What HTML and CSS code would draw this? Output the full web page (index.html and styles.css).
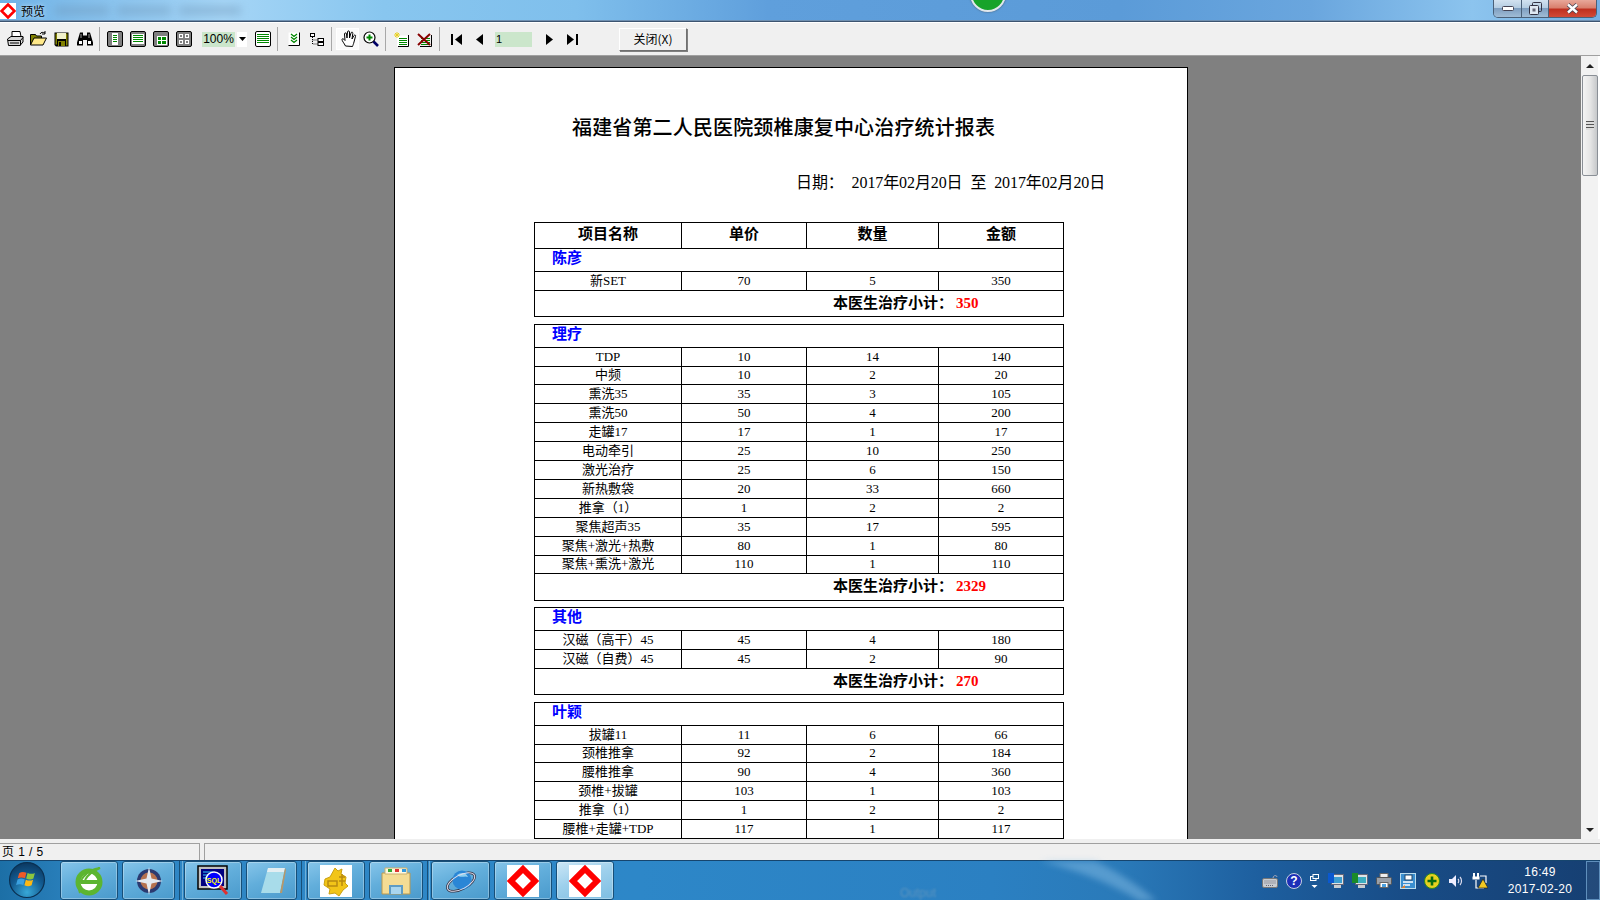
FILE: index.html
```html
<!DOCTYPE html>
<html lang="zh-CN">
<head>
<meta charset="utf-8">
<title>预览</title>
<link rel="stylesheet" href="styles.css">
</head>
<body>
<div class="screen">
  <header class="titlebar">
    <svg class="title-icon" viewBox="0 0 16 16"><rect width="16" height="16" fill="#fff"/><path d="M8 1.500 14.500 8 8 14.500 1.500 8z" fill="none" stroke="#f00" stroke-width="2.600"/></svg>
    <span class="title-text">预览</span>
    <span class="title-blur one"></span><span class="title-blur two"></span><span class="title-blur three"></span>
    <span class="dome"></span>
    <div class="wincontrols">
      <span class="wc wc-min"><svg width="12" height="6" viewBox="0 0 12 6"><rect x=".5" y=".5" width="11" height="4" rx="1" fill="#fff" stroke="#445"/></svg></span>
      <span class="wc wc-res"><svg width="13" height="13" viewBox="0 0 13 13"><rect x="3.500" y=".5" width="9" height="9" rx="1" fill="none" stroke="#334"/><rect x=".5" y="3.500" width="9" height="9" rx="1" fill="#dfe8f2" stroke="#334"/><rect x="3.500" y="6.500" width="3" height="3" fill="#667"/></svg></span>
      <span class="wc wc-close"><svg width="13" height="11" viewBox="0 0 13 11"><path d="M2 1.500 11 9.500M11 1.500 2 9.500" stroke="#445" stroke-width="4"/><path d="M2 1.500 11 9.500M11 1.500 2 9.500" stroke="#fff" stroke-width="2.400"/></svg></span>
    </div>
  </header>

  <nav class="toolbar">
    <span class="tool"><svg width="17" height="16" viewBox="0 0 17 16"><path d="M5 .5h8l1 5H5z" fill="#fff" stroke="#000"/><path d="M.5 8 4 5.500h12V11L13 14.500H1.500z" fill="#d8d8d8" stroke="#000"/><path d="M1 9.500h12.500L16 6.500M3 12h9" stroke="#000" fill="none"/><path d="M13.500 9.500v5" stroke="#000"/></svg></span>
    <span class="tool"><svg width="17" height="16" viewBox="0 0 17 16"><path d="M.5 14V3.500h5l1 1.500h5v2" fill="#808000" stroke="#000"/><path d="M.5 14 4 7h12.500L13 14z" fill="#ffe98a" stroke="#000"/><path d="M10 3c1-2 3-2 5-1" fill="none" stroke="#000"/><path d="M15 0v3h-3" fill="none" stroke="#000"/></svg></span>
    <span class="tool"><svg width="15" height="15" viewBox="0 0 15 15"><path d="M.5.5h14v14H2L.5 13z" fill="#000"/><rect x="3" y="1" width="9" height="6" fill="#f2f2cc"/><rect x="1.500" y="1.500" width="1.500" height="11" fill="#808000"/><rect x="12" y="1.500" width="1.500" height="12" fill="#808000"/><rect x="4" y="9" width="7" height="5" fill="#808000"/><rect x="5" y="10" width="2" height="4" fill="#000"/></svg></span>
    <span class="tool"><svg width="16" height="14" viewBox="0 0 16 14"><path d="M3 .5h3v3h4v-3h3l3 10v3h-6V8H6v5.500H0v-3z" fill="#000"/><rect x="2" y="9" width="3" height="3" fill="#fff"/><rect x="11" y="9" width="3" height="3" fill="#fff"/><rect x="3.500" y="2" width="1" height="4" fill="#999"/><rect x="11.500" y="2" width="1" height="4" fill="#999"/></svg></span>
    <span class="sep tight"></span>
    <span class="tool"><svg width="16" height="16" viewBox="0 0 16 16"><rect x=".5" y=".5" width="15" height="15" rx="1.500" fill="#808080" stroke="#000"/><rect x="5" y="2" width="6" height="12" fill="#fff"/><path d="M6 4.500h4M6 6.500h4M6 8.500h4M6 10.500h4" stroke="#080"/></svg></span>
    <span class="tool"><svg width="16" height="16" viewBox="0 0 16 16"><rect x=".5" y=".5" width="15" height="15" rx="1.500" fill="#808080" stroke="#000"/><rect x="2" y="3" width="12" height="10" fill="#fff"/><path d="M3 4.500h10M3 6.500h10M3 8.500h10M3 10.500h10" stroke="#080"/></svg></span>
    <span class="tool"><svg width="16" height="16" viewBox="0 0 16 16"><rect x=".5" y=".5" width="15" height="15" rx="1.500" fill="#808080" stroke="#000"/><rect x="4" y="5" width="10" height="9" fill="#fff"/><path d="M5 6h3v3H5zM9 6h4v3H9zM5 10h3v3H5zM9 10h4v3H9z" fill="#080"/></svg></span>
    <span class="tool"><svg width="16" height="16" viewBox="0 0 16 16"><rect x=".5" y=".5" width="15" height="15" rx="1.500" fill="#808080" stroke="#000"/><path d="M3 3h4v4H3zM9 3h4v4H9zM3 9h4v4H3zM9 9h4v4H9z" fill="#fff"/><path d="M4 4h2v2H4zM10 4h2v2h-2zM4 10h2v2H4zM10 10h2v2h-2z" fill="#808080"/></svg></span>
    <span class="combo">100%</span>
    <span class="dropdown"><svg width="7" height="4" viewBox="0 0 7 4"><path d="M0 0h7L3.500 4z" fill="#000"/></svg></span>
    <span class="tool list"><svg width="16" height="16" viewBox="0 0 16 16"><rect x=".5" y=".5" width="15" height="15" rx="1.500" fill="#fff" stroke="#000"/><path d="M2 3.500h12M2 5.500h12M2 7.500h12M2 9.500h12M2 11.500h12" stroke="#080"/></svg></span>
    <span class="sep"></span>
    <span class="tool"><svg width="12" height="14" viewBox="0 0 12 14"><path d="M.5.5h10.500v12.500H.5" fill="#fff"/><path d="M.5 13.500h11V.5" fill="none" stroke="#000"/><path d="M3 2 6 4.500 9 2M3 5 6 7.500 9 5M3 8 6 10.500 9 8" fill="none" stroke="#080" stroke-width="1.300"/></svg></span>
    <span class="tool"><svg width="14" height="13" viewBox="0 0 14 13"><rect x=".5" y=".5" width="4" height="3" fill="#fff" stroke="#000"/><rect x="8" y="5.500" width="5.500" height="3" fill="#fff" stroke="#000"/><rect x="8" y="9.500" width="5.500" height="3" fill="#fff" stroke="#000"/><path d="M2.500 4v7H8M2.500 7H8" fill="none" stroke="#000" stroke-dasharray="1 1"/></svg></span>
    <span class="sep"></span>
    <span class="tool pressed"><svg width="17" height="18" viewBox="0 0 17 18"><path d="M4.500 16C3 13 1 11 1 9.500S3 9 4 10.500L3.500 4c0-1.500 2-1.500 2 0l.5 4 .5-6c0-1.500 2-1.500 2 0L8.500 8l1.500-5c.5-1.500 2-1 1.800.4L11 9l2-3.500c.7-1 2-.5 1.500.8L13 12c-.5 2-1 3-1.500 4.500z" fill="#fff" stroke="#000"/></svg></span>
    <span class="tool"><svg width="16" height="16" viewBox="0 0 16 16"><circle cx="6.500" cy="6.500" r="5.500" fill="#fff" stroke="#000" stroke-width="1.200"/><path d="M6.500 3.500v6M3.500 6.500h6" stroke="#080" stroke-width="2"/><path d="M10.500 10.500 15 15" stroke="#006" stroke-width="2.600"/></svg></span>
    <span class="sep"></span>
    <span class="tool"><svg width="15" height="15" viewBox="0 0 15 15"><path d="M3 3.500h11v11H3" fill="#fff"/><path d="M14.500 3v11.500H4" fill="none" stroke="#000"/><path d="M5 6.500h8M5 8.500h8M5 10.500h8M5 12.500h8" stroke="#080"/><path d="M3 0v6M0 3h6M1 1l4 4M5 1 1 5" stroke="#e8d020"/></svg></span>
    <span class="tool"><svg width="15" height="15" viewBox="0 0 15 15"><path d="M14.500 3v11.500H3" fill="none" stroke="#000"/><path d="M4 6.500h9M4 8.500h9M4 10.500h9M4 12.500h9" stroke="#080"/><path d="M1 2 13 13M13 2 1 13" stroke="#800" stroke-width="2"/></svg></span>
    <span class="sep wide"></span>
    <span class="tool"><svg width="11" height="11" viewBox="0 0 11 11"><rect y="0" width="2" height="11"/><path d="M11 0v11L4 5.500z"/></svg></span>
    <span class="tool"><svg width="7" height="11" viewBox="0 0 7 11"><path d="M7 0v11L0 5.500z"/></svg></span>
    <span class="pageinput">1</span>
    <span class="tool next"><svg width="7" height="11" viewBox="0 0 7 11"><path d="M0 0v11l7-5.500z"/></svg></span>
    <span class="tool"><svg width="11" height="11" viewBox="0 0 11 11"><path d="M0 0v11l7-5.500z"/><rect x="9" width="2" height="11"/></svg></span>
    <button class="closebtn" type="button">关闭(X)</button>
  </nav>

  <div class="workspace">
    <main class="viewport">
      <article class="page">
        <h1 class="report-title">福建省第二人民医院颈椎康复中心治疗统计报表</h1>
        <p class="report-date">日期： 2017年02月20日 至 2017年02月20日</p>

        <table class="rt">
          <colgroup><col class="c1"><col class="c2"><col class="c3"><col class="c4"></colgroup>
          <tr class="h26 head"><th>项目名称</th><th>单价</th><th>数量</th><th>金额</th></tr>
          <tr class="h23"><td colspan="4" class="group">陈彦</td></tr>
          <tr class="h19"><td>新SET</td><td>70</td><td>5</td><td>350</td></tr>
          <tr class="h26 last"><td colspan="4" class="sum">本医生治疗小计：<span class="money">350</span></td></tr>
        </table>

        <table class="rt gap7">
          <colgroup><col class="c1"><col class="c2"><col class="c3"><col class="c4"></colgroup>
          <tr class="h23"><td colspan="4" class="group">理疗</td></tr>
          <tr class="h19"><td>TDP</td><td>10</td><td>14</td><td>140</td></tr>
          <tr class="h18"><td>中频</td><td>10</td><td>2</td><td>20</td></tr>
          <tr class="h19"><td>熏洗35</td><td>35</td><td>3</td><td>105</td></tr>
          <tr class="h19"><td>熏洗50</td><td>50</td><td>4</td><td>200</td></tr>
          <tr class="h19"><td>走罐17</td><td>17</td><td>1</td><td>17</td></tr>
          <tr class="h19"><td>电动牵引</td><td>25</td><td>10</td><td>250</td></tr>
          <tr class="h19"><td>激光治疗</td><td>25</td><td>6</td><td>150</td></tr>
          <tr class="h19"><td>新热敷袋</td><td>20</td><td>33</td><td>660</td></tr>
          <tr class="h19"><td>推拿（1）</td><td>1</td><td>2</td><td>2</td></tr>
          <tr class="h19"><td>聚焦超声35</td><td>35</td><td>17</td><td>595</td></tr>
          <tr class="h19"><td>聚焦+激光+热敷</td><td>80</td><td>1</td><td>80</td></tr>
          <tr class="h18"><td>聚焦+熏洗+激光</td><td>110</td><td>1</td><td>110</td></tr>
          <tr class="h27 last"><td colspan="4" class="sum up">本医生治疗小计：<span class="money">2329</span></td></tr>
        </table>

        <table class="rt gap6">
          <colgroup><col class="c1"><col class="c2"><col class="c3"><col class="c4"></colgroup>
          <tr class="h23"><td colspan="4" class="group">其他</td></tr>
          <tr class="h19"><td>汉磁（高干）45</td><td>45</td><td>4</td><td>180</td></tr>
          <tr class="h19"><td>汉磁（自费）45</td><td>45</td><td>2</td><td>90</td></tr>
          <tr class="h26 last"><td colspan="4" class="sum">本医生治疗小计：<span class="money">270</span></td></tr>
        </table>

        <table class="rt gap7">
          <colgroup><col class="c1"><col class="c2"><col class="c3"><col class="c4"></colgroup>
          <tr class="h23"><td colspan="4" class="group">叶颖</td></tr>
          <tr class="h19"><td>拔罐11</td><td>11</td><td>6</td><td>66</td></tr>
          <tr class="h18"><td>颈椎推拿</td><td>92</td><td>2</td><td>184</td></tr>
          <tr class="h19"><td>腰椎推拿</td><td>90</td><td>4</td><td>360</td></tr>
          <tr class="h19"><td>颈椎+拔罐</td><td>103</td><td>1</td><td>103</td></tr>
          <tr class="h19"><td>推拿（1）</td><td>1</td><td>2</td><td>2</td></tr>
          <tr class="h19 last"><td>腰椎+走罐+TDP</td><td>117</td><td>1</td><td>117</td></tr>
        </table>
      </article>
    </main>
    <aside class="vscroll">
      <span class="arrow"><svg width="8" height="4" viewBox="0 0 8 4"><path d="M0 4 4 0l4 4z" fill="#222"/></svg></span>
      <span class="thumb"><span class="grip"></span></span>
      <span class="arrow down"><svg width="8" height="4" viewBox="0 0 8 4"><path d="M0 0l4 4 4-4z" fill="#222"/></svg></span>
    </aside>
  </div>

  <div class="status">
    <span class="panel first">页 1 / 5</span>
    <span class="panel second"></span>
  </div>

  <footer class="taskbar">
    <svg class="streak" width="1600" height="40" viewBox="0 0 1600 40"><path d="M1040 0h55c25 12 45 26 62 40h-18C1115 24 1080 10 1040 0z" fill="#8fc4e8" opacity=".45"/></svg>
    <span class="ghost">Output</span>
    <span class="orb"><svg width="36" height="36" viewBox="0 0 32 32"><defs><radialGradient id="orbg" cx=".5" cy=".85" r=".8"><stop offset="0" stop-color="#38a8d8"/><stop offset=".6" stop-color="#125a90"/><stop offset="1" stop-color="#0c3c66"/></radialGradient></defs><circle cx="16" cy="16" r="15.500" fill="url(#orbg)" stroke="#0a2f50"/><path d="M9 10c2-1.500 4-1.500 6.500-.5l-1.300 5c-2.200-1-4.200-1-6.400 0z" fill="#ef5a28"/><path d="M16.500 9.700c2.500 1 4.500 1 6.500 0l-1.300 5c-2 1-4.200 1-6.400 0z" fill="#8cc63f"/><path d="M7.600 15.500c2.200-1 4.200-1 6.400 0l-1.300 5c-2.200-1-4.200-1-6.400 0z" fill="#3aa0e0"/><path d="M15 15.700c2.200 1 4.400 1 6.400 0l-1.300 5c-2 1-4.200 1-6.400 0z" fill="#fdb813"/></svg></span>
    <span class="task w58"><svg width="32" height="32" viewBox="0 0 32 32"><circle cx="16" cy="17" r="11" fill="#fff" stroke="#5cb531" stroke-width="5"/><path d="M8 17h17" stroke="#5cb531" stroke-width="4"/><path d="M7 28C2 18 14 4 27 3c-7 3-12 6-15 12" fill="none" stroke="#5cb531" stroke-width="2"/></svg></span>
    <span class="task w53"><svg width="32" height="32" viewBox="0 0 32 32"><circle cx="16" cy="16" r="12" fill="#2b3a70"/><circle cx="16" cy="16" r="8.500" fill="#b5714e"/><path d="M16 2l2.500 11.500L30 16l-11.500 2.500L16 30l-2.500-11.500L2 16l11.500-2.500z" fill="#e4e8ee"/></svg></span>
    <span class="grippers g5"></span>
    <span class="task w58"><svg width="32" height="32" viewBox="0 0 32 32"><rect x="1" y="1" width="29" height="23" fill="#c0c0c0" stroke="#000" stroke-width="1.500"/><rect x="4" y="4" width="23" height="17" fill="#000080"/><path d="M6 7h10M6 10h8M6 13h7" stroke="#3cf"/><circle cx="17" cy="15" r="8" fill="#00f" stroke="#fff" stroke-width="1.500"/><text x="17" y="18" class="sqltext">SQL</text><path d="M23 21l7 8" stroke="#e03030" stroke-width="3"/></svg></span>
    <span class="task w51"><svg width="32" height="32" viewBox="0 0 32 32"><path d="M12 3h17l-5 25H5z" fill="#a8dcea"/><path d="M12 3h17l-1 4H11z" fill="#e3eef2"/><path d="M24 28 29 3l1 2-4 23z" fill="#b89868"/></svg></span>
    <span class="grippers g6"></span>
    <span class="task w58"><svg width="32" height="32" viewBox="0 0 32 32"><rect width="32" height="32" fill="#fff"/><path d="M15 3l3 3 4-2-1 5 5 3-1 6 3 3-5 4-4 6-4-3-6 1 1-5-6-4 1-6 5-2z" fill="#f2c518" stroke="#caa010"/><path d="M8 16h9v5H8zM19 12h6M19 16h6M22 9v12" stroke="#b88a10" fill="none" stroke-width="1.500"/></svg></span>
    <span class="task w54"><svg width="32" height="32" viewBox="0 0 32 32"><path d="M2 8h28v21H2z" fill="#f4dc94" stroke="#b89850"/><path d="M5 3h22v6H5z" fill="#fff8e0" stroke="#c8b070"/><rect x="8" y="4" width="4" height="3" fill="#3a3"/><rect x="15" y="4" width="4" height="3" fill="#d33"/><rect x="22" y="4" width="4" height="3" fill="#39d"/><path d="M10 29V21h12v8" fill="#a9d6ee" stroke="#5e9cc4" stroke-width="2"/></svg></span>
    <span class="grippers g4"></span>
    <span class="task w59"><svg width="32" height="32" viewBox="0 0 32 32"><ellipse cx="16" cy="17" rx="15" ry="7" transform="rotate(-28 16 17)" fill="none" stroke="#334" stroke-width="2.500"/><circle cx="17" cy="15" r="9.500" fill="#2a86d6"/><path d="M12 10c4-3 9-3 11 2-4-2-6 2-11-2z" fill="#8fd0f0"/><ellipse cx="16" cy="17" rx="15" ry="7" transform="rotate(-28 16 17)" fill="none" stroke="#dde" stroke-width="1"/></svg></span>
    <span class="task w58"><svg width="32" height="32" viewBox="0 0 32 32"><rect width="32" height="32" fill="#fff"/><path d="M16 4 28 16 16 28 4 16z" fill="none" stroke="#f00" stroke-width="6"/></svg></span>
    <span class="task w58 active"><svg width="32" height="32" viewBox="0 0 32 32"><rect width="32" height="32" fill="#fff"/><path d="M16 4 28 16 16 28 4 16z" fill="none" stroke="#f00" stroke-width="6"/></svg></span>
    <div class="tray">
      <span class="ti"><svg width="16" height="14" viewBox="0 0 16 14"><path d="M11 4c0-3 4-3 4-1" fill="none" stroke="#aab"/><rect x=".5" y="4.500" width="15" height="9" rx="1.500" fill="#c8ccd0" stroke="#777"/><path d="M2.500 7h11M2.500 9h11M4 11.500h8" stroke="#667" stroke-dasharray="1 1"/></svg></span>
      <span class="ti"><svg width="16" height="16" viewBox="0 0 16 16"><circle cx="8" cy="8" r="7.500" fill="#1c2fb8" stroke="#c8d0e0"/><text x="8" y="12" class="helptext">?</text></svg></span>
      <span class="ti flagt"><svg width="9" height="16" viewBox="0 0 9 16"><rect x=".5" y="3.500" width="5.500" height="4" fill="none" stroke="#fff"/><rect x="3" y="1.500" width="5.500" height="4" fill="#1f5c94" stroke="#fff"/><path d="M1.500 12h6L4.500 15z" fill="#fff"/></svg></span>
      <span class="ti"><svg width="16" height="16" viewBox="0 0 16 16"><rect x="3.500" y="1.500" width="12" height="10" fill="#dfe3e6" stroke="#667"/><rect x="6" y="4" width="8" height="6" fill="#3c9dd0"/><rect x="0" y="0" width="6" height="10" fill="#0a58d0"/><rect x="6" y="12" width="7" height="3" fill="#c8ccd0"/></svg></span>
      <span class="ti"><svg width="16" height="16" viewBox="0 0 16 16"><rect x="3.500" y="1.500" width="12" height="10" fill="#dfe3e6" stroke="#667"/><rect x="6" y="4" width="8" height="6" fill="#3cadc0"/><rect x="0" y="0" width="6" height="10" fill="#1a8a2a"/><rect x="6" y="12" width="7" height="3" fill="#c8ccd0"/></svg></span>
      <span class="ti"><svg width="16" height="15" viewBox="0 0 16 15"><rect x="4" y=".5" width="8" height="4" fill="#eee" stroke="#666"/><rect x=".5" y="4.500" width="15" height="7" rx="1" fill="#9aa0a8" stroke="#555"/><rect x="4" y="9.500" width="8" height="5" fill="#fff" stroke="#666"/><rect x="6" y="11" width="4" height="3" fill="#4aa0e0"/></svg></span>
      <span class="ti"><svg width="16" height="16" viewBox="0 0 16 16"><rect x=".5" y=".5" width="15" height="15" fill="#3a8fd0" stroke="#bde"/><rect x="5" y="2" width="7" height="5" fill="#fff" stroke="#246"/><path d="M3 9h10M3 12h7" stroke="#fff" stroke-width="1.500"/><path d="M1 15l4-3v3z" fill="#e08030"/></svg></span>
      <span class="ti"><svg width="16" height="16" viewBox="0 0 16 16"><circle cx="8" cy="8" r="7.500" fill="#e8d020" stroke="#2a8a20" stroke-width="1"/><path d="M8 3.500v9M3.500 8h9" stroke="#0a6a10" stroke-width="2.600"/></svg></span>
      <span class="ti"><svg width="16" height="14" viewBox="0 0 16 14"><path d="M1 5h3l4-4v12L4 9H1z" fill="#eef"/><path d="M10 5c1 1 1 3 0 4M12 3c2 2 2 6 0 8" fill="none" stroke="#dde" stroke-width="1.200"/></svg></span>
      <span class="ti"><svg width="16" height="16" viewBox="0 0 16 16"><rect x="1" y="0" width="2" height="4" fill="#fff"/><rect x="5" y="0" width="2" height="4" fill="#fff"/><rect x=".5" y="3.500" width="7" height="3" fill="#fff"/><path d="M4 7v8h8M8 3h6v7" fill="none" stroke="#fff" stroke-width="1.200"/><path d="M11 6l5 9H6z" fill="#f4c820" stroke="#222" stroke-width=".7"/></svg></span>
    </div>
    <div class="clock"><span>16:49</span><span>2017-02-20</span></div>
    <span class="showdesk"></span>
  </footer>
</div>
</body>
</html>
```

FILE: styles.css
```css
* { box-sizing: border-box; }
html, body { margin: 0; padding: 0; }
body { font-family: "Noto Sans CJK SC", "Liberation Sans", sans-serif; background: #808080; }

.screen { width: 1600px; height: 900px; display: flex; flex-direction: column; overflow: hidden; position: relative; }

/* title bar */
.titlebar {
  height: 22px; flex: none; position: relative; display: flex; align-items: center;
  background: linear-gradient(90deg, #6fb2e6 0, #a5d5f6 14%, #88c6ef 24%, #7fbfec 36%, #5f9fdc 48%, #5b9bd8 70%, #6aa6de 82%, #8cc4ee 92%, #76b0e4 100%);
  border-bottom: 1px solid #3c5470; box-shadow: inset 0 -1px 0 #6f8fb0;
}
.title-icon { width: 16px; height: 16px; flex: none; }
.title-text { margin-left: 5px; font-size: 12px; line-height: 16px; color: #000; text-shadow: 0 0 4px #d8eefc; }
.title-blur { height: 9px; background: #6d93b4; opacity: .4; filter: blur(4px); }
.title-blur.one { width: 54px; margin-left: 10px; }
.title-blur.two { width: 54px; margin-left: 8px; }
.title-blur.three { width: 62px; margin-left: 8px; }
.dome {
  position: absolute; left: 970px; top: -24px; width: 36px; height: 36px; border-radius: 50%;
  background: #17a32a; border: 2px solid #e0e8ee; box-shadow: 0 0 2px #456;
}
.wincontrols {
  position: absolute; right: 3px; top: 0; height: 18px; display: flex;
  border: 1px solid #4a6078; border-top: 0; border-radius: 0 0 5px 5px; overflow: hidden;
}
.wc { display: flex; align-items: center; justify-content: center; height: 17px; }
.wc-min, .wc-res { width: 28px; background: linear-gradient(#d2e2f0 0, #b5cde2 45%, #7f9fc0 50%, #a0bcd6 100%); border-right: 1px solid #4a6078; }
.wc-res { width: 27px; }
.wc-close { width: 47px; background: linear-gradient(#e8a89a 0, #d9806e 45%, #bf3020 55%, #d24a38 100%); }

/* tool bar */
.toolbar {
  height: 34px; flex: none; display: flex; align-items: center; padding: 0 0 0 4px;
  background: #f0f0f0; border-top: 1px solid #fff; border-bottom: 1px solid #a0a0a0;
}
.tool { width: 23px; height: 22px; flex: none; display: flex; align-items: center; justify-content: center; }
.tool.list { margin-left: 4px; }
.tool.next { margin-left: 6px; }
.tool.pressed { background: #fbfbfb; box-shadow: inset 0 0 0 1px #fff; padding-left: 3px; }
.sep { width: 1px; height: 24px; flex: none; background: #a8a8a8; margin: 0 4px 0 3px; }
.sep.tight { margin-right: 3px; }
.sep.wide { margin-right: 5px; }
.combo {
  width: 33px; height: 15px; flex: none; margin-left: 7px; background: #cbe6cb;
  font: 12px/15px "Liberation Sans", sans-serif; color: #000; text-align: center;
}
.dropdown { width: 10px; height: 15px; flex: none; margin-left: 2px; background: #fff; display: flex; align-items: center; justify-content: center; }
.pageinput {
  width: 37px; height: 15px; flex: none; margin-left: 4px; padding-left: 1px; background: #cbe6cb;
  font: 11px/15px "Liberation Sans", sans-serif; color: #000;
}
.closebtn {
  width: 68px; height: 23px; flex: none; margin-left: 35px; padding: 0; font-size: 12px; line-height: 18px; color: #000;
  font-family: "Noto Sans CJK SC", sans-serif; background: #f0f0f0;
  border: 1px solid; border-color: #fff #707070 #707070 #fff; box-shadow: 1px 1px 0 #808080;
}

/* document area */
.workspace { flex: none; height: 783px; display: flex; background: #808080; }
.viewport { width: 1581px; flex: none; overflow: hidden; padding: 11px 0 0 394px; }
.page {
  width: 794px; min-height: 1100px; background: #fff; border: 1px solid #000; padding: 46px 0 0 139px;
  font-family: "Liberation Serif", "Noto Sans CJK SC", sans-serif; color: #000;
}
.report-title { margin: 0 0 29px 38px; font-size: 20px; line-height: 28px; font-weight: 500; white-space: nowrap; letter-spacing: .15px; }
.report-date { margin: 0 0 27px 262px; font-size: 16px; line-height: 24px; white-space: pre; letter-spacing: -.1px; word-spacing: 4px; }

.rt { border-collapse: separate; border-spacing: 0; table-layout: fixed; width: 530px; }
.rt.gap7 { margin-top: 7px; }
.rt.gap6 { margin-top: 6px; }
.c1 { width: 147px; } .c2 { width: 125px; } .c3 { width: 132px; } .c4 { width: 126px; }
.rt td, .rt th {
  padding: 0 0 2px; text-align: center; vertical-align: middle; font-size: 13px; line-height: 13px; font-weight: 400;
  border-top: 1px solid #000; border-left: 1px solid #000; overflow: hidden;
}
.rt td:last-child, .rt th:last-child { border-right: 1px solid #000; }
.rt .last td { border-bottom: 1px solid #000; }
.rt .head th { font-size: 15px; font-weight: 700; }
.rt td.group { text-align: left; padding: 0 0 3px 17px; font-size: 15px; font-weight: 700; color: #00f; }
.rt td.sum { text-align: left; padding: 0 0 0 298px; font-size: 15px; font-weight: 700; }
.rt td.sum.up { padding-bottom: 2px; }
.money { color: #f00; margin-left: 3px; }
.h18 td { height: 18px; } .h19 td { height: 19px; } .h23 td { height: 23px; }
.h26 td, .h26 th { height: 26px; } .h27 td { height: 27px; }
.last.h26 td { height: 27px; } .last.h27 td { height: 28px; } .last.h19 td { height: 20px; }

/* scrollbar */
.vscroll { width: 19px; flex: none; background: #f2f2f2; border-right: 2px solid #fff; display: flex; flex-direction: column; align-items: center; position: relative; }
.arrow { height: 19px; flex: none; display: flex; align-items: center; justify-content: center; width: 17px; }
.arrow.down { margin-top: auto; }
.thumb {
  width: 16px; height: 101px; flex: none; border: 1px solid #8a8f96; border-radius: 2px;
  background: linear-gradient(90deg, #f4f4f4, #e6e6e6 50%, #c6c8ca); display: flex; align-items: center; justify-content: center;
}
.grip { width: 8px; height: 9px; background: repeating-linear-gradient(#555 0 1px, #ddd 1px 3px); }

/* status bar */
.status { height: 21px; flex: none; display: flex; background: #f0f0f0; padding-top: 4px; gap: 4px; }
.panel { height: 17px; border-top: 1px solid #a0a0a0; background: #f0f0f0; font: 12px/16px "Liberation Sans", "Noto Sans CJK SC", sans-serif; letter-spacing: .4px; color: #000; padding-left: 2px; }
.panel.first { width: 200px; border-right: 1px solid #a0a0a0; }
.panel.second { flex: 1; border-left: 1px solid #a0a0a0; }

/* task bar */
.taskbar {
  height: 40px; flex: none; display: flex; align-items: stretch; position: relative; padding-left: 60px;
  background: linear-gradient(90deg, #1c6fa6 0, #2f86c4 6%, #2d87c8 40%, #2b80c2 62%, #2a7ab9 70%, #1d5e9e 79%, #184c86 88%, #163f72 100%);
  border-top: 1px solid #16456e;
}
.streak { position: absolute; left: 0; top: 0; filter: blur(3px); }
.ghost { position: absolute; left: 900px; top: 24px; font: 12px/16px "Liberation Sans", sans-serif; color: #5c94bf; filter: blur(1.2px); }
.orb { position: absolute; left: 9px; top: 1px; width: 36px; height: 36px; }
.task {
  position: relative; display: flex; align-items: center; justify-content: center; flex: none; height: 39px; margin-right: 4px;
  border: 1px solid #174f78; border-radius: 3px; box-shadow: inset 0 0 0 1px rgba(255,255,255,.3);
  background: linear-gradient(160deg, #86c5ea 0, #62aedb 45%, #4a9acc 100%);
}
.task.active { background: linear-gradient(160deg, #cbe6f6 0, #9ed0ec 45%, #7dbde2 100%); }
.w51 { width: 51px; } .w53 { width: 53px; } .w54 { width: 54px; } .w58 { width: 58px; } .w59 { width: 59px; }
.grippers { flex: none; border-left: 1px solid #174f78; border-right: 1px solid #6fb0d8; margin: 0 1px 0 0; }
.g4 { width: 3px; } .g5 { width: 4px; } .g6 { width: 5px; }
.tray { position: absolute; left: 1262px; top: 0; height: 39px; display: flex; align-items: center; gap: 8px; }
.ti { width: 16px; display: flex; justify-content: center; flex: none; }
.flagt { width: 9px; margin-right: 1px; }
.clock {
  position: absolute; left: 1490px; top: 3px; width: 100px; display: flex; flex-direction: column; align-items: center;
  font: 12px/17px "Liberation Sans", sans-serif; color: #fff; letter-spacing: .3px;
}
.showdesk { position: absolute; right: 0; top: 0; width: 14px; height: 39px; border: 1px solid #5f8fbc; background: rgba(255,255,255,.06); }
.sqltext { font: 700 7px "Liberation Sans", sans-serif; fill: #ffff00; text-anchor: middle; }
.helptext { font: 700 12px "Liberation Sans", sans-serif; fill: #fff; text-anchor: middle; }
```
